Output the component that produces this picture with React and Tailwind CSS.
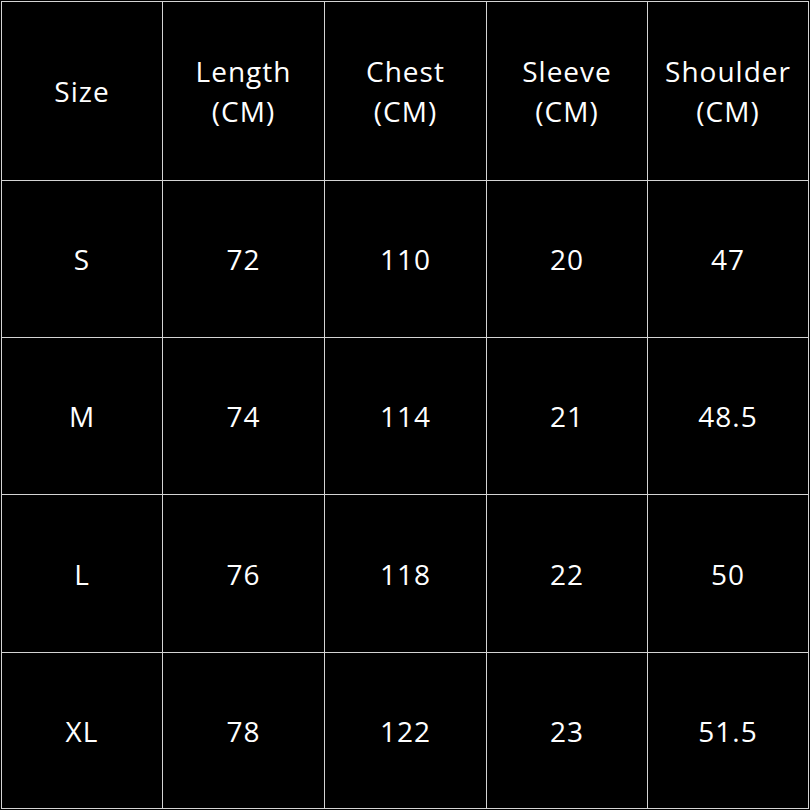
import React from 'react';

const headers = [
    ['Size'],
    ['Length', '(CM)'],
    ['Chest', '(CM)'],
    ['Sleeve', '(CM)'],
    ['Shoulder', '(CM)'],
];

const rows = [
    ['S', '72', '110', '20', '47'],
    ['M', '74', '114', '21', '48.5'],
    ['L', '76', '118', '22', '50'],
    ['XL', '78', '122', '23', '51.5'],
];

const App = () => {
    return (
        <div className="w-[810px] h-[810px] bg-black p-px" style={{fontFamily: '"Open Sans", sans-serif'}}>
            <div className="w-[808px] h-[808px] grid grid-cols-[160px_161px_161px_160px_160px] grid-rows-[178px_156px_156px_157px_155px] gap-px p-px bg-[#d4d4d4] text-white text-[28px] leading-[40px] tracking-[1px]">
                {headers.map((h, i) => (
                    <div key={i} className="bg-black flex flex-col items-center justify-center text-center">
                        {h.map((line, j) => <span key={j}>{line}</span>)}
                    </div>
                ))}
                {rows.map((row, r) => row.map((cell, c) => (
                    <div key={`${r}-${c}`} className="bg-black flex items-center justify-center">
                        {cell}
                    </div>
                )))}
            </div>
        </div>
    );
};

export default App;
